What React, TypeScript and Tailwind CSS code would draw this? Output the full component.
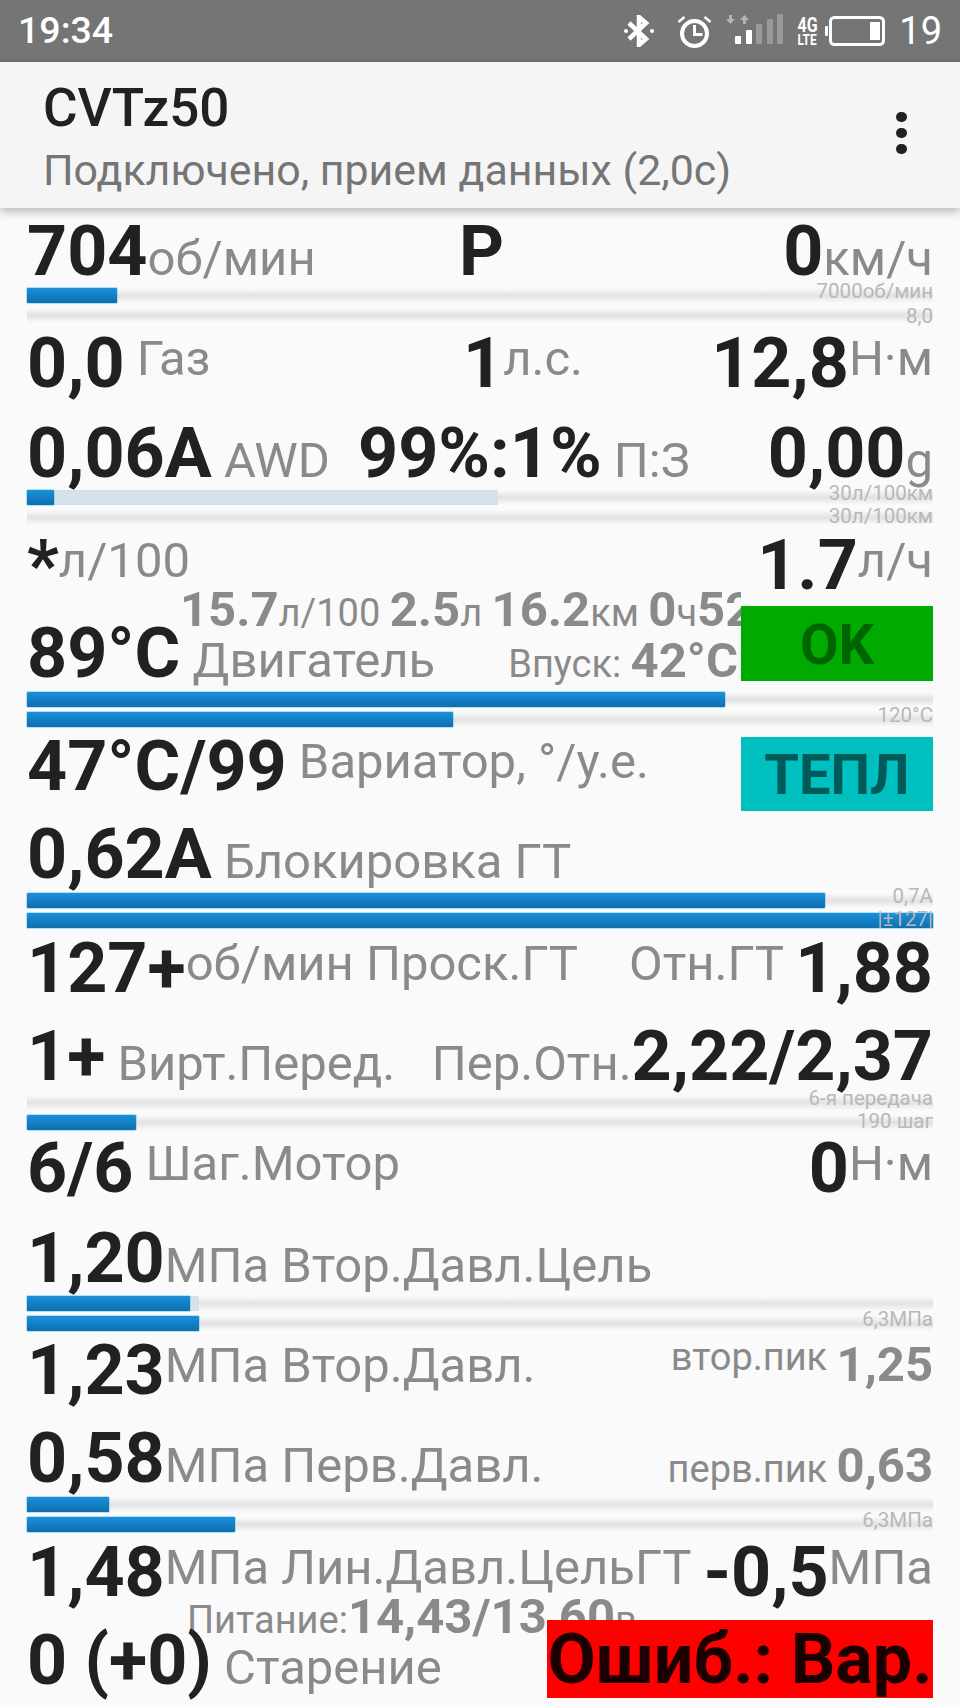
import type { ReactNode } from "react";

const num = "text-[#212121] font-bold text-[70px] leading-[64px]";
const unit = "text-[#8a8a8a] font-normal text-[49px] leading-none";
const unitUp = "text-[#8a8a8a] font-normal text-[49px] leading-none align-[12px]";
const mid = "text-[#8a8a8a] font-bold text-[49px] leading-[44px]";
const small = "text-[#8a8a8a] font-normal text-[38px] leading-none";

function Bar({ value, ghost, note, noteClass }: { value: number; ghost?: number; note?: string; noteClass?: string }) {
  return (
    <div className="relative h-[15px] bg-linear-to-b from-[#fafafa] via-[#e2e2e2] to-[#fafafa]">
      {ghost ? <div className="absolute inset-y-0 left-0 bg-[#d3e2ec]" style={{ width: ghost }} /> : null}
      {value > 0 ? (
        <div
          className="absolute inset-y-0 left-0 rounded-[1px] bg-linear-to-b from-[#1b90dc] to-[#0d6fae] shadow-[0_0_0_1px_rgba(90,190,240,0.45)]"
          style={{ width: value }}
        />
      ) : null}
      {note ? (
        <span
          className={`absolute right-0 text-[20.5px] leading-none whitespace-nowrap text-[#b8b8b8] ${noteClass ?? "bottom-[2px]"}`}
        >
          {note}
        </span>
      ) : null}
    </div>
  );
}

function Bars({ a, b, className }: { a: ReactNode; b: ReactNode; className: string }) {
  return (
    <div className={`flex flex-col gap-[5px] ${className}`}>
      {a}
      {b}
    </div>
  );
}

function Row({ className, children }: { className: string; children: ReactNode }) {
  return <div className={`flex justify-between items-baseline whitespace-pre h-[66px] ${className}`}>{children}</div>;
}

function StatusIcons() {
  return (
    <div className="flex items-center">
      <svg width="30" height="32" viewBox="0 0 30 32" className="mr-[23px]" fill="none" stroke="#fff" strokeWidth="4.5">
        <path d="M5 8l17 16-7 6V2l7 6L5 24" />
        <circle cx="2" cy="16" r="2" fill="#fff" stroke="none" />
        <circle cx="28" cy="16" r="2" fill="#fff" stroke="none" />
      </svg>
      <svg width="35" height="34" viewBox="0 0 35 34" className="mr-[13px]" fill="none" stroke="#fff">
        <circle cx="17.5" cy="19.500" r="12.500" strokeWidth="4" />
        <path d="M17.500 11v9.500h8" strokeWidth="3" />
        <path d="M1.500 8l6-5M33.500 8l-6-5" strokeWidth="2.500" />
      </svg>
      <svg width="58" height="34" viewBox="0 0 58 34" className="mr-[14px]">
        <path d="M4 1h3v4h3l-4.500 5L1 5h3zM18 10h3V6h3l-4.500-5L15 6h3z" fill="#b5b5b5" />
        <rect x="10" y="22" width="6" height="8" rx="1" fill="#fff" />
        <rect x="21" y="16" width="6" height="14" rx="1" fill="#fff" />
        <rect x="31" y="10" width="6" height="20" rx="1" fill="#9a9a9a" />
        <rect x="42" y="5" width="6" height="25" rx="1" fill="#9a9a9a" />
        <rect x="52" y="0" width="6" height="30" rx="1" fill="#9a9a9a" />
      </svg>
      <div className="w-[20px] mr-[8px] flex flex-col items-center text-white font-bold leading-none">
        <span className="text-[20px] h-[18px] leading-[18px] scale-x-[0.8]">4G</span>
        <span className="text-[15px] h-[13px] leading-[13px] scale-x-[0.8]">LTE</span>
      </div>
      <svg width="60" height="30" viewBox="0 0 60 30" className="mr-[14px]" fill="none">
        <rect x="0" y="10" width="3" height="10" rx="1" fill="#fff" />
        <rect x="5.500" y="1.500" width="53" height="27" rx="4" stroke="#fff" strokeWidth="3" />
        <rect x="45" y="6" width="10" height="18" fill="#fff" />
      </svg>
      <span className="text-white text-[38px] leading-none">19</span>
    </div>
  );
}

export default function App() {
  return (
    <div className="w-[960px] h-[1707px] overflow-hidden bg-[#fafafa] [font-family:Roboto,sans-serif]">
      <div className="h-[62px] bg-[#757575] flex items-center justify-between pl-[18px] pr-[18px]">
        <span className="text-white text-[37.5px] leading-none font-medium">19:34</span>
        <StatusIcons />
      </div>
      <div className="relative z-10 h-[146px] bg-[#f5f5f5] shadow-[0_3px_10px_rgba(0,0,0,0.3)] pl-[43px] pr-[53px] pt-[3px] flex items-center justify-between">
        <div className="flex flex-col">
          <span className="text-[#212121] text-[53px] leading-none font-medium mb-[14px]">CVTz50</span>
          <span className="text-[#757575] text-[42.9px] leading-none">Подключено, прием данных (2,0с)</span>
        </div>
        <div className="flex flex-col gap-[6px] mb-[7px]">
          <div className="w-[11px] h-[10px] rounded-full bg-[#212121]" />
          <div className="w-[11px] h-[10px] rounded-full bg-[#212121]" />
          <div className="w-[11px] h-[10px] rounded-full bg-[#212121]" />
        </div>
      </div>

      <main className="px-[27px] pt-[11px]">
        <Row className="">
          <span className={`${num} w-[432px]`}>704<span className={unit}>об/мин</span></span>
          <span className={`${num} mr-auto`}>P</span>
          <span className={num}>0<span className={unit}>км/ч</span></span>
        </Row>
        <Bars
          className="mt-[3px]"
          a={<Bar value={90} note="7000об/мин" />}
          b={<Bar value={0} note="8,0" noteClass="bottom-[-3px]" />}
        />

        <Row className="mt-[8px]">
          <span className={`${num} w-[436px]`}>0,0<span className={unitUp}> Газ</span></span>
          <span className={`${num} mr-auto`}>1<span className={unitUp}>л.с.</span></span>
          <span className={num}>12,8<span className={unitUp}>Н·м</span></span>
        </Row>

        <Row className="mt-[24px]">
          <span className={`${num} w-[331px]`}>0,06А<span className={unit}> AWD</span></span>
          <span className={`${num} mr-auto`}>99%:1%<span className={unit}> П:З</span></span>
          <span className={num}>0,00<span className={unit}>g</span></span>
        </Row>
        <Bars
          className="mt-[3px]"
          a={<Bar value={27} ghost={471} note="30л/100км" />}
          b={<Bar value={0} note="30л/100км" noteClass="bottom-[-1px]" />}
        />

        <Row className="mt-[8px]">
          <span className={num}>*<span className={unitUp}>л/100</span></span>
          <span className={num}>1.7<span className={unitUp}>л/ч</span></span>
        </Row>

        <div className="flex -mt-[11px] items-start">
          <div className="w-[714px] overflow-hidden">
            <div className="h-[46px] whitespace-nowrap pl-[153px] overflow-hidden">
              <span className={mid}>15.7<span className={small}>л/100 </span>2.5<span className={small}>л </span>16.2<span className={small}>км </span>0<span className={small}>ч</span>52</span>
            </div>
            <Row className="-mt-[13px] pr-[3px]">
              <span className={num}>89°C<span className={unit}> Двигатель</span></span>
              <span className={small}>Впуск: <span className={mid}>42°C</span></span>
            </Row>
          </div>
          <div className="mt-[18px] pt-[3px] w-[192px] h-[75px] bg-[#00aa00] flex items-center justify-center text-[#006400] font-bold text-[56px] leading-none">OK</div>
        </div>
        <Bars className="mt-[5px]" a={<Bar value={698} />} b={<Bar value={426} note="120°C" />} />

        <div className="flex justify-between items-start mt-[7px] whitespace-pre">
          <div className="flex items-baseline h-[66px]">
            <span className={num}>47°C/99<span className={unitUp}> Вариатор, °/у.е.</span></span>
          </div>
          <div className="mt-[3px] pt-[2px] w-[192px] h-[74px] bg-[#00bfbf] flex items-center justify-center text-[#005a5a] font-bold text-[56px] leading-none">ТЕПЛ</div>
        </div>

        <Row className="mt-[11px]">
          <span className={num}>0,62А<span className={unit}> Блокировка ГТ</span></span>
        </Row>
        <Bars
          className="mt-[5px]"
          a={<Bar value={798} note="0,7А" />}
          b={<Bar value={906} note="|±127|" noteClass="bottom-[-1px] text-[#6f8ea3]" />}
        />

        <Row className="mt-[8px]">
          <span className={num}>127+<span className={unitUp}>об/мин Проск.ГТ</span></span>
          <span className={num}><span className={unitUp}>Отн.ГТ </span>1,88</span>
        </Row>

        <Row className="mt-[22px]">
          <span className={num}>1+<span className={unit}> Вирт.Перед.</span></span>
          <span className={num}><span className={unit}>Пер.Отн.</span>2,22/2,37</span>
        </Row>
        <Bars
          className="mt-[5px]"
          a={<Bar value={0} note="6-я передача" />}
          b={<Bar value={109} note="190 шаг" noteClass="bottom-[-1px]" />}
        />

        <Row className="mt-[6px]">
          <span className={num}>6/6<span className={unitUp}> Шаг.Мотор</span></span>
          <span className={num}>0<span className={unitUp}>Н·м</span></span>
        </Row>

        <Row className="mt-[24px]">
          <span className={num}>1,20<span className={unit}>МПа Втор.Давл.Цель</span></span>
        </Row>
        <Bars className="mt-[4px]" a={<Bar value={163} ghost={172} />} b={<Bar value={172} note="6,3МПа" />} />

        <Row className="mt-[7px]">
          <span className={num}>1,23<span className={unitUp}>МПа Втор.Давл.</span></span>
          <span className={num}>
            <span className={`${small} align-[24px]`}>втор.пик </span>
            <span className={`${mid} align-[13px]`}>1,25</span>
          </span>
        </Row>

        <Row className="mt-[22px]">
          <span className={num}>0,58<span className={unit}>МПа Перв.Давл.</span></span>
          <span className={small}>перв.пик <span className={mid}>0,63</span></span>
        </Row>
        <Bars className="mt-[5px]" a={<Bar value={82} />} b={<Bar value={208} note="6,3МПа" />} />

        <Row className="mt-[8px]">
          <span className={num}>1,48<span className={unitUp}>МПа Лин.Давл.ЦельГТ</span></span>
          <span className={num}>-0,5<span className={unitUp}>МПа</span></span>
        </Row>

        <div className="relative -mt-[11px]">
          <div className="h-[46px] whitespace-nowrap pl-[160px]">
            <span className={small}>Питание:<span className={mid}>14,43/13,60</span>в</span>
          </div>
          <Row className="-mt-[13px]">
            <span className={num}>0 (+0)<span className={unit}> Старение</span></span>
          </Row>
          <div className="absolute right-0 top-[25px] w-[386px] h-[78px] bg-[#ff0000] flex items-center justify-center text-[#1a0000] font-bold text-[70px] leading-none whitespace-nowrap">Ошиб.: Вар.</div>
        </div>
      </main>
    </div>
  );
}
